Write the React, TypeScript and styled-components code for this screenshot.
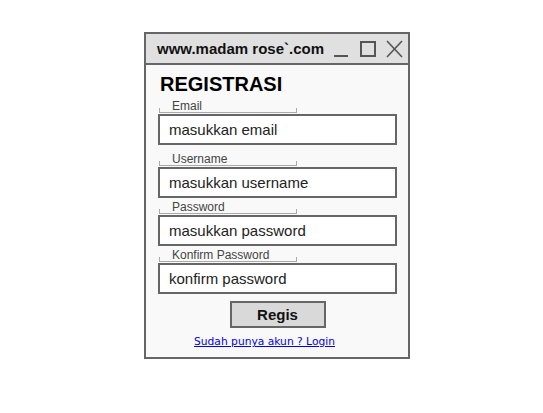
import React from "react";
import styled, { createGlobalStyle } from "styled-components";

const Global = createGlobalStyle`
  html, body { margin: 0; padding: 0; background: #ffffff; }
  body { font-family: "Liberation Sans", Arial, sans-serif; }
`;

const Page = styled.div`
  width: 543px;
  height: 413px;
  padding: 32px 0 0 144px;
  box-sizing: border-box;
`;

const Window = styled.div`
  width: 266px;
  height: 327px;
  box-sizing: border-box;
  border: 2px solid #666666;
  background: #f9f9f9;
  display: flex;
  flex-direction: column;
`;

const TitleBar = styled.div`
  height: 31px;
  box-sizing: border-box;
  border-bottom: 2px solid #666666;
  background: #e0e0e0;
  display: flex;
  align-items: center;
  padding: 0 4px 0 11px;
`;

const Title = styled.div`
  font-weight: bold;
  font-size: 15px;
  color: #111111;
  flex: 1;
  white-space: nowrap;
`;

const Controls = styled.div`
  display: flex;
  align-items: center;
`;

const Body = styled.div`
  flex: 1;
  display: flex;
  flex-direction: column;
  padding: 7px 11px 0 12px;
`;

const Heading = styled.div`
  font-weight: bold;
  font-size: 20px;
  line-height: 24px;
  color: #000000;
  padding-left: 2px;
  margin-bottom: 6px;
`;

const Field = styled.div<{ $gap: number }>`
  display: flex;
  flex-direction: column;
  margin-bottom: ${(p) => p.$gap}px;
`;

const Legend = styled.div`
  position: relative;
  width: 138px;
  height: 11px;
  box-sizing: border-box;
  border: 1px solid #aaaaaa;
  border-top: none;
  margin-left: 1px;
  font-size: 12px;
  line-height: 11px;
  color: #444444;
  padding-left: 12px;
  margin-bottom: 1px;
  &::after {
    content: "";
    position: absolute;
    left: -1px;
    right: -1px;
    top: 0;
    height: 6px;
    background: #f9f9f9;
  }
  span {
    position: relative;
    z-index: 1;
    top: -1px;
  }
`;

const Input = styled.div`
  height: 31px;
  box-sizing: border-box;
  border: 2px solid #666666;
  background: #ffffff;
  font-size: 15px;
  color: #222222;
  display: flex;
  align-items: center;
  padding-left: 9px;
`;

const ButtonRow = styled.div`
  display: flex;
  justify-content: center;
  margin-top: 7px;
`;

const Button = styled.div`
  width: 96px;
  height: 27px;
  box-sizing: border-box;
  border: 2px solid #666666;
  background: #d9d9d9;
  font-weight: bold;
  font-size: 15px;
  color: #111111;
  display: flex;
  align-items: center;
  justify-content: center;
`;

const LinkRow = styled.div`
  display: flex;
  justify-content: center;
  margin-top: 7px;
  padding-right: 26px;
`;

const Link = styled.a`
  font-family: "DejaVu Sans", sans-serif;
  font-size: 10.7px;
  color: #0000ee;
  text-decoration: underline;
`;

const fields = [
  { label: "Email", text: "masukkan email", gap: 10 },
  { label: "Username", text: "masukkan username", gap: 5 },
  { label: "Password", text: "masukkan password", gap: 5 },
  { label: "Konfirm Password", text: "konfirm password", gap: 0 },
];

export default function App() {
  return (
    <>
      <Global />
      <Page>
        <Window>
          <TitleBar>
            <Title>www.madam rose`.com</Title>
            <Controls>
              <svg width="72" height="24" viewBox="0 0 72 24">
                <line x1="2" y1="19" x2="16" y2="19" stroke="#555" strokeWidth="2" />
                <rect x="29" y="5" width="14" height="14" fill="none" stroke="#555" strokeWidth="2" />
                <line x1="55" y1="4" x2="70" y2="20" stroke="#555" strokeWidth="1.6" />
                <line x1="70" y1="4" x2="55" y2="20" stroke="#555" strokeWidth="1.6" />
              </svg>
            </Controls>
          </TitleBar>
          <Body>
            <Heading>REGISTRASI</Heading>
            {fields.map((f) => (
              <Field key={f.label} $gap={f.gap}>
                <Legend>
                  <span>{f.label}</span>
                </Legend>
                <Input>{f.text}</Input>
              </Field>
            ))}
            <ButtonRow>
              <Button>Regis</Button>
            </ButtonRow>
            <LinkRow>
              <Link href="#">Sudah punya akun ? Login</Link>
            </LinkRow>
          </Body>
        </Window>
      </Page>
    </>
  );
}
